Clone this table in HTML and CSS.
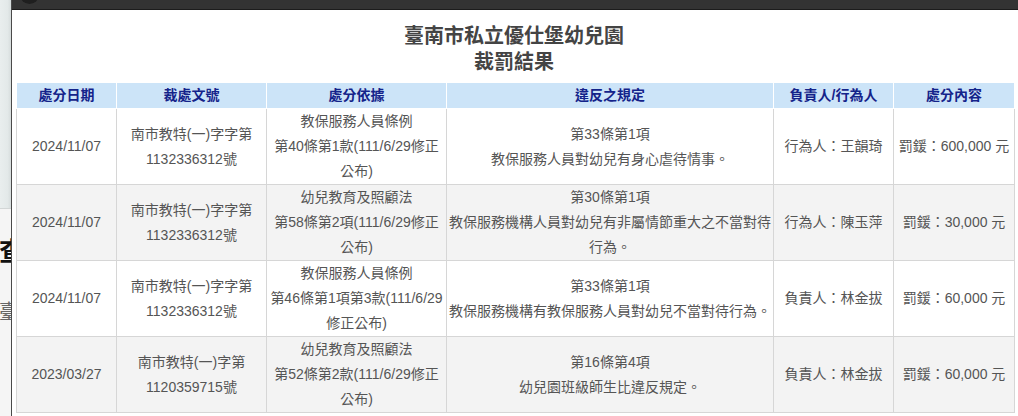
FILE: index.html
```html
<!DOCTYPE html>
<html lang="zh-Hant">
<head>
<meta charset="utf-8">
<title>裁罰結果</title>
<link rel="stylesheet" href="styles.css">
</head>
<body>
  <aside class="bg-page">
    <div class="bg-head"></div>
    <div class="bg-title">查</div>
    <div class="bg-sub">臺</div>
  </aside>
  <main class="modal">
    <div class="modal-bar"><span class="bar-dot"></span></div>
    <div class="modal-body">
      <h1 class="title">臺南市私立優仕堡幼兒園<br>裁罰結果</h1>
      <table class="result">
        <thead>
          <tr>
            <th class="c-date">處分日期</th>
            <th class="c-doc">裁處文號</th>
            <th class="c-basis">處分依據</th>
            <th class="c-rule">違反之規定</th>
            <th class="c-person">負責人/行為人</th>
            <th class="c-penalty">處分內容</th>
          </tr>
        </thead>
        <tbody>
          <tr>
            <td>2024/11/07</td>
            <td>南市教特(一)字字第1132336312號</td>
            <td>教保服務人員條例<br>第40條第1款(111/6/29修正公布)</td>
            <td>第33條第1項<br>教保服務人員對幼兒有身心虐待情事。</td>
            <td>行為人：王韻琦</td>
            <td>罰鍰：600,000 元</td>
          </tr>
          <tr class="alt">
            <td>2024/11/07</td>
            <td>南市教特(一)字字第1132336312號</td>
            <td>幼兒教育及照顧法<br>第58條第2項(111/6/29修正公布)</td>
            <td>第30條第1項<br>教保服務機構人員對幼兒有非屬情節重大之不當對待行為。</td>
            <td>行為人：陳玉萍</td>
            <td>罰鍰：30,000 元</td>
          </tr>
          <tr>
            <td>2024/11/07</td>
            <td>南市教特(一)字字第1132336312號</td>
            <td>教保服務人員條例<br>第46條第1項第3款(111/6/29修正公布)</td>
            <td>第33條第1項<br>教保服務機構有教保服務人員對幼兒不當對待行為。</td>
            <td>負責人：林金拔</td>
            <td>罰鍰：60,000 元</td>
          </tr>
          <tr class="alt">
            <td>2023/03/27</td>
            <td>南市教特(一)字第1120359715號</td>
            <td>幼兒教育及照顧法<br>第52條第2款(111/6/29修正公布)</td>
            <td>第16條第4項<br>幼兒園班級師生比違反規定。</td>
            <td>負責人：林金拔</td>
            <td>罰鍰：60,000 元</td>
          </tr>
        </tbody>
      </table>
    </div>
  </main>
</body>
</html>
```

FILE: styles.css
```css
html, body {
  margin: 0;
  padding: 0;
}

body {
  display: flex;
  height: 416px;
  overflow: hidden;
  background: #f4f4f4;
  font-family: "Liberation Sans", "Noto Sans CJK TC", sans-serif;
}

.bg-page {
  flex: none;
  width: 11px;
  overflow: hidden;
  white-space: nowrap;
  background: #f5f5f5;
}

.bg-head {
  height: 208px;
  background: linear-gradient(to right, #e9eeee 0%, #e3e9e9 70%, #d6dcdc 100%);
  border-bottom: 1px solid #d2d6d6;
}

.bg-title {
  margin-top: 27px;
  margin-left: -1px;
  font-size: 26px;
  line-height: 32px;
  font-weight: bold;
  color: #111;
}

.bg-sub {
  margin-top: 32px;
  margin-left: -1px;
  font-size: 20px;
  line-height: 24px;
  color: #666;
}

.modal {
  flex: 1;
  min-width: 0;
  background: #fff;
  border-left: 1px solid #4a4a4a;
  display: flex;
  flex-direction: column;
}

.modal-bar {
  flex: none;
  height: 9px;
  background: #333;
  border-bottom: 1px solid #1c1c1c;
  display: flex;
  overflow: hidden;
}

.bar-dot {
  flex: none;
  width: 19px;
  height: 19px;
  margin-top: -15px;
  margin-left: 8px;
  border-radius: 50%;
  background: #1f1f1f;
}

.modal-body {
  padding: 13px 0 0 4px;
}

.title {
  margin: 0 0 7px;
  width: 996px;
  text-align: center;
  font-size: 20px;
  line-height: 26px;
  font-weight: bold;
  color: #444;
}

.result {
  width: 992px;
  table-layout: fixed;
  border-collapse: collapse;
  font-size: 14px;
  line-height: 25px;
  color: #555;
}

.result th {
  background: #cce4f8;
  color: #14238a;
  font-weight: bold;
  border: 1px solid #fff;
  padding: 0;
  text-align: center;
}

.result td {
  border: 1px solid #d6d6d6;
  padding: 0 1px;
  text-align: center;
  vertical-align: middle;
  background: #fff;
}

.result tr.alt td {
  background: #f3f3f3;
}

.c-date { width: 99px; }
.c-doc { width: 149px; }
.c-basis { width: 179px; }
.c-rule { width: 326px; }
.c-person { width: 119px; }
.c-penalty { width: 120px; }
```
